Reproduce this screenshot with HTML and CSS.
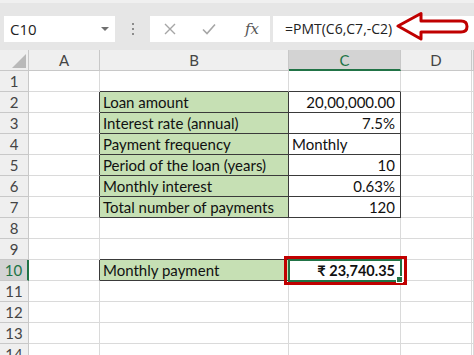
FILE: index.html
```html
<!DOCTYPE html>
<html lang="en">
  <head>
    <title>Loan payment sheet</title>
    <meta charset="UTF-8" />
    <link rel="stylesheet" href="styles.css">
  </head>
  <body>
    <div class="toolbar">
      <div class="namebox">
        <span>C10</span>
        <span class="caret"></span>
      </div>
      <div class="grip"><i></i><i></i><i></i></div>
      <div class="fx-buttons">
        <svg class="fx-icon" width="14" height="14" viewBox="0 0 14 14">
          <path d="M2,2 L12,12 M12,2 L2,12" stroke="#a6a6a6" stroke-width="1.4" fill="none" />
        </svg>
        <svg class="fx-icon" width="16" height="14" viewBox="0 0 16 14">
          <path d="M2,7.5 L6,11.5 L14,2.5" stroke="#a6a6a6" stroke-width="1.6" fill="none" />
        </svg>
        <span class="fx">fx</span>
      </div>
      <div class="formula">=PMT(C6,C7,-C2)</div>
      <svg class="arrow" width="76" height="32" viewBox="0 0 76 32">
        <path d="M2,16 L25,3.5 L25,11 L65,11 Q71,11 71,16.5 Q71,22 65,22 L25,22 L25,29 Z"
              stroke="#c00000" stroke-width="3" stroke-linejoin="round" fill="#fff" />
      </svg>
    </div>

    <div class="sheet">
      <div class="h corner"><span class="tri"></span></div>
      <div class="h col">A</div>
      <div class="h col">B</div>
      <div class="h col sel">C</div>
      <div class="h col">D</div>
      <div class="h col"></div>

      <div class="h row">1</div>
      <div class="c"></div>
      <div class="c bt"></div>
      <div class="c bt"></div>
      <div class="c"></div>
      <div class="c"></div>

      <div class="h row">2</div>
      <div class="c br"></div>
      <div class="c box lab">Loan amount</div>
      <div class="c box num">20,00,000.00</div>
      <div class="c"></div>
      <div class="c"></div>

      <div class="h row">3</div>
      <div class="c br"></div>
      <div class="c box lab">Interest rate (annual)</div>
      <div class="c box num">7.5%</div>
      <div class="c"></div>
      <div class="c"></div>

      <div class="h row">4</div>
      <div class="c br"></div>
      <div class="c box lab">Payment frequency</div>
      <div class="c box">Monthly</div>
      <div class="c"></div>
      <div class="c"></div>

      <div class="h row">5</div>
      <div class="c br"></div>
      <div class="c box lab">Period of the loan (years)</div>
      <div class="c box num">10</div>
      <div class="c"></div>
      <div class="c"></div>

      <div class="h row">6</div>
      <div class="c br"></div>
      <div class="c box lab">Monthly interest</div>
      <div class="c box num">0.63%</div>
      <div class="c"></div>
      <div class="c"></div>

      <div class="h row">7</div>
      <div class="c br"></div>
      <div class="c box lab">Total number of payments</div>
      <div class="c box num">120</div>
      <div class="c"></div>
      <div class="c"></div>

      <div class="h row">8</div>
      <div class="c"></div>
      <div class="c"></div>
      <div class="c"></div>
      <div class="c"></div>
      <div class="c"></div>

      <div class="h row">9</div>
      <div class="c"></div>
      <div class="c bt"></div>
      <div class="c"></div>
      <div class="c"></div>
      <div class="c"></div>

      <div class="h row sel">10</div>
      <div class="c br"></div>
      <div class="c box lab">Monthly payment</div>
      <div class="c num active">
        <span class="callout"></span>
        <b>₹ 23,740.35</b>
        <span class="handle"></span>
      </div>
      <div class="c"></div>
      <div class="c"></div>

      <div class="h row">11</div>
      <div class="c"></div>
      <div class="c"></div>
      <div class="c"></div>
      <div class="c"></div>
      <div class="c"></div>

      <div class="h row">12</div>
      <div class="c"></div>
      <div class="c"></div>
      <div class="c"></div>
      <div class="c"></div>
      <div class="c"></div>

      <div class="h row">13</div>
      <div class="c"></div>
      <div class="c"></div>
      <div class="c"></div>
      <div class="c"></div>
      <div class="c"></div>

      <div class="h row">14</div>
      <div class="c"></div>
      <div class="c"></div>
      <div class="c"></div>
      <div class="c"></div>
      <div class="c"></div>
    </div>
  </body>
</html>
```

FILE: styles.css
```css
body {
  margin: 0;
  background-color: #fff;
  overflow: hidden;
  font-family: Lato, "Noto Sans", "DejaVu Sans", sans-serif;
  color: #111;
}

/* formula bar */

.toolbar {
  position: relative;
  display: flex;
  align-items: flex-start;
  height: 50px;
  padding: 13px 0 0 4px;
  box-sizing: border-box;
  background-color: #e6e6e6;
  border-top: 3px solid #f0f0f0;
}

.toolbar > div {
  height: 26px;
}

.namebox {
  display: flex;
  align-items: center;
  justify-content: space-between;
  width: 111px;
  padding: 0 6px 0 6px;
  box-sizing: border-box;
  background-color: #fff;
  font-family: "Open Sans", sans-serif;
  font-size: 15px;
  color: #222;
}

.caret {
  width: 0;
  height: 0;
  border-left: 4px solid transparent;
  border-right: 4px solid transparent;
  border-top: 4px solid #707070;
}

.grip {
  display: flex;
  flex-direction: column;
  align-items: center;
  justify-content: center;
  gap: 3px;
  width: 35px;
}

.grip i {
  width: 2px;
  height: 2px;
  background-color: #8c8c8c;
}

.fx-buttons {
  display: flex;
  align-items: center;
  width: 120px;
  padding-left: 13px;
  box-sizing: border-box;
  background-color: #fff;
}

.fx-icon {
  margin-right: 24px;
}

.fx {
  margin-left: 4px;
  font-family: "DejaVu Serif", serif;
  font-style: italic;
  font-size: 15px;
  color: #555;
}

.formula {
  flex: 1;
  margin-left: 3px;
  padding-left: 12px;
  background-color: #fff;
  font-family: "Open Sans", sans-serif;
  font-size: 14px;
  line-height: 26px;
  color: #222;
}

.arrow {
  position: absolute;
  left: 396px;
  top: 7px;
}

/* grid */

.sheet {
  display: grid;
  grid-template-columns: 29px 71px 189px 112px 71px 1fr;
  grid-template-rows: 21px 21px;
  grid-auto-rows: 21px;
  font-size: 15px;
}

.sheet > div {
  box-sizing: border-box;
  border-right: 1px solid #dadada;
  border-bottom: 1px solid #dadada;
  white-space: nowrap;
  line-height: 20px;
}

.sheet > .h {
  background-color: #efefef;
  border-color: #c8c8c8;
  color: #444;
  text-align: center;
}

.sheet > .corner {
  position: relative;
}

.tri {
  position: absolute;
  right: 2px;
  bottom: 2px;
  width: 0;
  height: 0;
  border-left: 14px solid transparent;
  border-bottom: 14px solid #b9b9b9;
}

.sheet > .h.sel {
  background-color: #d3d3d3;
  color: #217346;
}

.sheet > .col.sel {
  border-bottom: 2px solid #217346;
}

.sheet > .row.sel {
  border-right: 2px solid #217346;
}

.sheet > .bt {
  border-bottom-color: #3a3a3a;
}

.sheet > .br {
  border-right-color: #3a3a3a;
}

.sheet > .box {
  border-color: #3a3a3a;
  padding: 0 3px;
}

.sheet > .lab {
  background-color: #c6e0b4;
}

.sheet > .num {
  text-align: right;
  padding: 0 5px;
}

.sheet > .active {
  position: relative;
  outline: 2px solid #217346;
  outline-offset: -1px;
}

.active b {
  font-weight: 700;
  font-size: 14.5px;
}

.handle {
  position: absolute;
  right: -3px;
  bottom: -3px;
  width: 5px;
  height: 5px;
  background-color: #217346;
  border: 1px solid #fff;
}

.callout {
  position: absolute;
  left: -5px;
  top: -4px;
  right: -7px;
  bottom: -5px;
  border: 3px solid #c00000;
}
```
